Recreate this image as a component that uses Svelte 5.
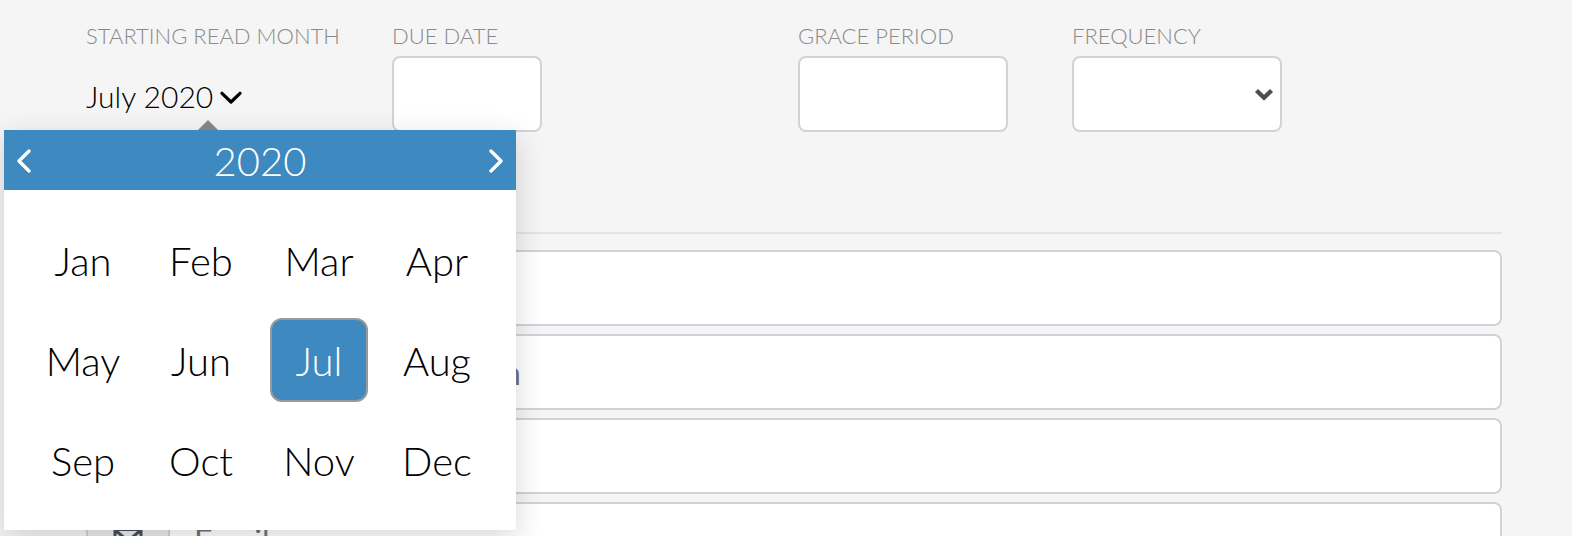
<script>
  const months = [
    'Jan', 'Feb', 'Mar', 'Apr',
    'May', 'Jun', 'Jul', 'Aug',
    'Sep', 'Oct', 'Nov', 'Dec',
  ]

  const monthNames = {
    Jan: 'January', Feb: 'February', Mar: 'March', Apr: 'April',
    May: 'May', Jun: 'June', Jul: 'July', Aug: 'August',
    Sep: 'September', Oct: 'October', Nov: 'November', Dec: 'December',
  }

  const contacts = [
    { id: 'name', placeholder: 'Full Name', type: 'text' },
    { id: 'company', placeholder: 'Company/Organization', type: 'text' },
    { id: 'phone', placeholder: 'Phone', type: 'tel' },
    { id: 'email', placeholder: 'Email', type: 'email' },
  ]

  let year = $state(2020)
  let selected = $state({ month: 'Jul', year: 2020 })
  let open = $state(true)
</script>

<main>
  <div class="fields">
    <div class="field">
      <span class="label" id="start-label">STARTING READ MONTH</span>
      <div class="picker">
        <button
          class="toggle"
          type="button"
          aria-labelledby="start-label"
          aria-expanded={open}
          onclick={() => (open = !open)}
        >
          {monthNames[selected.month]} {selected.year}
          <svg class="caret" viewBox="0 0 22 14" aria-hidden="true">
            <path d="M2 2.300 11 11l9-8.700" />
          </svg>
        </button>

        {#if open}
          <div class="popup">
            <div class="header">
              <button class="nav" type="button" aria-label="Previous year" onclick={() => year--}>
                <svg viewBox="0 0 16 24" aria-hidden="true">
                  <path d="M13 2 3 12l10 10" />
                </svg>
              </button>
              <span>{year}</span>
              <button class="nav" type="button" aria-label="Next year" onclick={() => year++}>
                <svg viewBox="0 0 16 24" aria-hidden="true">
                  <path d="m3 2 10 10L3 22" />
                </svg>
              </button>
            </div>
            <div class="months">
              {#each months as month}
                <button
                  class="month"
                  class:selected={month === selected.month && year === selected.year}
                  type="button"
                  onclick={() => (selected = { month, year })}
                >
                  {month}
                </button>
              {/each}
            </div>
          </div>
        {/if}
      </div>
    </div>

    <div class="field">
      <label class="label" for="due">DUE DATE</label>
      <input class="box short" id="due" type="text" />
    </div>

    <div class="field">
      <label class="label" for="grace">GRACE PERIOD</label>
      <input class="box" id="grace" type="text" />
    </div>

    <div class="field">
      <label class="label" for="frequency">FREQUENCY</label>
      <div class="select">
        <select class="box" id="frequency">
          <option value=""></option>
          <option value="monthly">Monthly</option>
          <option value="quarterly">Quarterly</option>
        </select>
        <svg class="arrow" viewBox="0 0 20 14" aria-hidden="true">
          <path d="m2.500 2.500 7.500 7.300 7.500-7.300" />
        </svg>
      </div>
    </div>
  </div>

  <hr />

  <div class="contacts">
    {#each contacts as contact}
      <div class="group">
        <label class="addon" for={contact.id} aria-label={contact.placeholder}>
          <svg viewBox="0 0 30 24" aria-hidden="true">
            {#if contact.id === 'email'}
              <path d="M2 1.500h26v21H2zM2 2l13 11L28 2M2 22l9-10M28 22l-9-10" />
            {:else if contact.id === 'phone'}
              <path d="M9 2h12v20H9zM13 18h4" />
            {:else if contact.id === 'company'}
              <path d="M4 22V2h22v20zM11 8h2M17 8h2M11 14h2M17 14h2" />
            {:else}
              <path d="M10 7a5 5 0 1 0 10 0 5 5 0 0 0-10 0M4 22c0-11 22-11 22 0z" />
            {/if}
          </svg>
        </label>
        <input id={contact.id} type={contact.type} placeholder={contact.placeholder} />
      </div>
    {/each}
  </div>
</main>

<style>
  :global(body) {
    background: #f5f5f5;
  }

  main {
    padding: 22px 70px 0 86px;
    font-family: Lato, sans-serif;
    font-weight: 300;
    color: #000;
  }

  button,
  input,
  select {
    margin: 0;
    font: inherit;
    color: inherit;
    box-sizing: border-box;
  }

  button {
    padding: 0;
    border: 0;
    background: none;
    cursor: pointer;
  }

  svg {
    display: block;
    fill: none;
    stroke: currentColor;
  }

  .fields {
    display: grid;
    grid-template-columns: 306fr 406fr 274fr 430fr;
  }

  .label {
    display: block;
    height: 34px;
    font-size: 22px;
    line-height: 28px;
    color: #8a8a8a;
    white-space: nowrap;
  }

  .box {
    display: block;
    width: 210px;
    height: 76px;
    padding: 0 24px;
    border: 2px solid #ced4da;
    border-radius: 8px;
    background: #fff;
    font-size: 32px;
  }

  .short {
    width: 150px;
  }

  .picker {
    position: relative;
  }

  .toggle {
    display: flex;
    align-items: center;
    gap: 7px;
    height: 80px;
    font-size: 30px;
    white-space: nowrap;
  }

  .caret {
    width: 22px;
    height: 14px;
    margin-top: 4px;
    stroke-width: 3.2;
    stroke-linecap: round;
    stroke-linejoin: round;
  }

  .popup {
    position: absolute;
    z-index: 1;
    top: 74px;
    left: -82px;
    width: 512px;
    background: #fff;
    box-shadow: 0 8px 28px rgba(0, 0, 0, 0.16);
    font-size: 40px;
  }

  .popup::before {
    content: '';
    position: absolute;
    left: 194px;
    bottom: 100%;
    border: 10px solid transparent;
    border-top-width: 0;
    border-bottom-color: #848484;
  }

  .header {
    display: flex;
    align-items: center;
    justify-content: space-between;
    box-sizing: border-box;
    height: 60px;
    padding: 2px 12px 0;
    background: #3d89c0;
    color: #fff;
  }

  .nav svg {
    width: 16px;
    height: 24px;
    stroke-width: 3.4;
    stroke-linecap: round;
    stroke-linejoin: round;
  }

  .months {
    display: grid;
    grid-template-columns: repeat(4, 1fr);
    grid-auto-rows: 84px;
    gap: 16px 20px;
    padding: 28px 30px;
  }

  .month {
    padding-top: 2px;
    border: 2px solid transparent;
    border-radius: 12px;
  }

  .selected {
    border-color: #999;
    background: #3d89c0;
    color: #fff;
  }

  .select {
    position: relative;
    width: 210px;
  }

  select {
    appearance: none;
  }

  .arrow {
    position: absolute;
    top: 32px;
    right: 8px;
    width: 20px;
    height: 14px;
    color: #495057;
    stroke-width: 4.4;
    pointer-events: none;
  }

  hr {
    height: 2px;
    margin: 96px 0 16px;
    border: 0;
    background: #e3e3e3;
  }

  .contacts {
    display: grid;
    gap: 8px;
  }

  .group {
    display: flex;
    height: 76px;
    box-sizing: border-box;
    border: 2px solid #ced4da;
    border-radius: 8px;
    background: #fff;
    overflow: hidden;
  }

  .addon {
    display: flex;
    align-items: center;
    justify-content: center;
    width: 80px;
    border-right: 2px solid #ced4da;
    background: #e9ecef;
    color: #495057;
  }

  .addon svg {
    width: 30px;
    height: 24px;
    stroke-width: 3;
  }

  .group input {
    flex: 1;
    min-width: 0;
    padding: 0 24px;
    border: 0;
    background: none;
    font-size: 32px;
    font-weight: 400;
  }

  .group input::placeholder {
    color: #6c757d;
    opacity: 1;
  }
</style>
